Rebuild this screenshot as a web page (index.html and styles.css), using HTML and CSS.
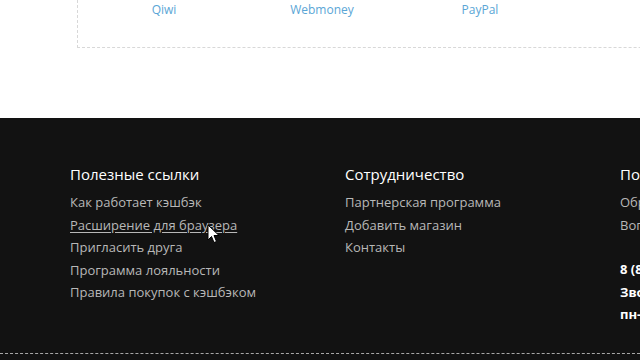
FILE: index.html
```html
<!DOCTYPE html>
<html lang="ru">
<head>
    <meta charset="UTF-8">
    <meta name="viewport" content="width=device-width, initial-scale=1.0">
    <title>Кэшбэк</title>
    <link rel="stylesheet" href="styles.css">
</head>
<body>
    <div class="page">
        <!-- Payment methods -->
        <div class="payments">
            <a class="pay-item" href="#">Qiwi</a>
            <a class="pay-item" href="#">Webmoney</a>
            <a class="pay-item" href="#">PayPal</a>
        </div>

        <footer class="footer">
            <div class="footer-cols">
                <div class="footer-col">
                    <h3>Полезные ссылки</h3>
                    <a href="#">Как работает кэшбэк</a>
                    <a href="#" class="hover">Расширение для браузера
                        <svg class="cursor" width="14" height="20" viewBox="0 0 14 20">
                            <path d="M1 1 L1 16 L4.5 12.5 L7 18.5 L9.5 17.5 L7 11.5 L12 11.5 Z" fill="#fff" stroke="#000" stroke-width="1"/>
                        </svg>
                    </a>
                    <a href="#">Пригласить друга</a>
                    <a href="#">Программа лояльности</a>
                    <a href="#">Правила покупок с кэшбэком</a>
                </div>
                <div class="footer-col">
                    <h3>Сотрудничество</h3>
                    <a href="#">Партнерская программа</a>
                    <a href="#">Добавить магазин</a>
                    <a href="#">Контакты</a>
                </div>
                <div class="footer-col">
                    <h3>Помощь</h3>
                    <a href="#">Обратная связь</a>
                    <a href="#">Вопросы и ответы</a>
                    <div class="contacts">
                        <p>8 (800) 000-00-00</p>
                        <p>Звонок бесплатный</p>
                        <p>пн-пт 10:00-19:00</p>
                    </div>
                </div>
            </div>
            <div class="footer-line"></div>
        </footer>
    </div>
</body>
</html>
```

FILE: styles.css
```css
body {
    margin: 0;
    font-family: "Open Sans", Arial, sans-serif;
    background-color: #fff;
    overflow: hidden;
}

.page {
    width: 640px;
    overflow: hidden;
}

.payments {
    display: flex;
    margin-left: 77px;
    width: 700px;
    height: 48px;
    padding-left: 7px;
    border-left: 1px dashed #d8d8d8;
    border-bottom: 1px dashed #d8d8d8;
    box-sizing: border-box;
}

.pay-item {
    width: 158px;
    text-align: center;
    font-size: 12px;
    line-height: 20px;
    color: #5aa6d6;
    text-decoration: none;
}

.footer {
    margin-top: 70px;
    background-color: #121212;
    padding-top: 45px;
    height: 242px;
    box-sizing: border-box;
}

.footer-cols {
    display: flex;
    padding-left: 70px;
    width: 900px;
}

.footer-col {
    width: 275px;
    display: flex;
    flex-direction: column;
    align-items: flex-start;
}

.footer-col h3 {
    margin: 0 0 6px;
    font-size: 15px;
    font-weight: 500;
    line-height: 22px;
    color: #fff;
}

.footer-col a {
    font-size: 13px;
    line-height: 22.5px;
    color: #b8b8b8;
    text-decoration: none;
}

.footer-col a.hover {
    position: relative;
    text-decoration: underline;
    text-underline-offset: 2px;
}

.cursor {
    position: absolute;
    left: 137px;
    top: 10px;
}

.contacts {
    margin-top: 22px;
}

.contacts p {
    margin: 0;
    font-size: 13px;
    font-weight: 700;
    line-height: 22.5px;
    color: #fff;
}

.footer-line {
    margin-top: 27px;
    border-top: 1px dashed #a8a8a8;
}
```
